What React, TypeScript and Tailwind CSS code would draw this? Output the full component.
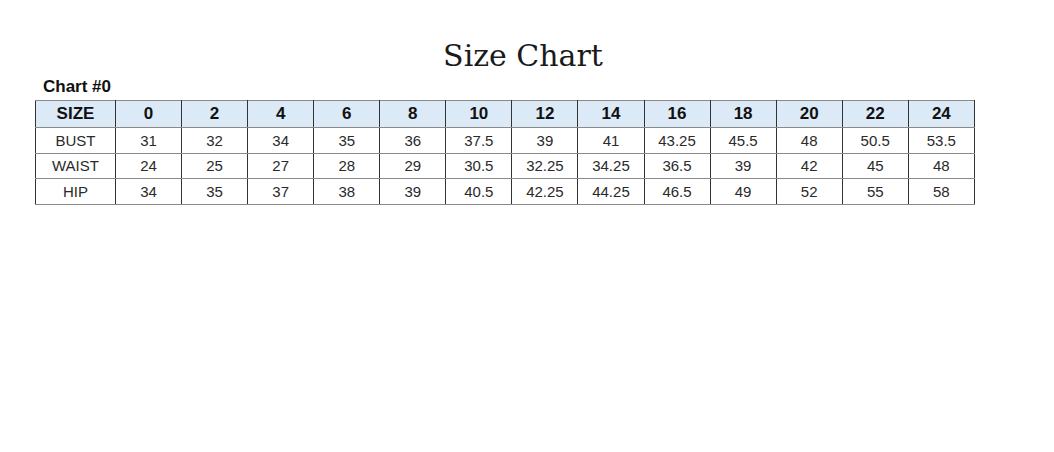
const sizes = ["0", "2", "4", "6", "8", "10", "12", "14", "16", "18", "20", "22", "24"];

const rows = [
  { label: "BUST", values: ["31", "32", "34", "35", "36", "37.5", "39", "41", "43.25", "45.5", "48", "50.5", "53.5"] },
  { label: "WAIST", values: ["24", "25", "27", "28", "29", "30.5", "32.25", "34.25", "36.5", "39", "42", "45", "48"] },
  { label: "HIP", values: ["34", "35", "37", "38", "39", "40.5", "42.25", "44.25", "46.5", "49", "52", "55", "58"] },
];

export default function App() {
  return (
    <div className="w-[1054px] h-[452px] bg-white pl-[35px] pt-[39px] font-['Liberation_Sans',Arial,sans-serif]">
      <h1 className="w-[976px] text-center font-['DejaVu_Serif',serif] text-[30px] leading-[34px] text-[#1a1a1a]">
        Size Chart
      </h1>
      <p className="mt-[3px] pl-[8px] text-[17px] leading-[22px] font-bold text-[#111]">Chart #0</p>
      <table className="mt-[2px] w-[940px] table-fixed border-collapse">
        <thead>
          <tr className="h-[27px] bg-[#dce9f6]">
            <th className="w-[80px] border border-x-[#333] border-y-[#8a8a8a] text-[17px] font-bold text-[#111] p-0">SIZE</th>
            {sizes.map((s) => (
              <th key={s} className="border border-x-[#333] border-y-[#8a8a8a] text-[17px] font-bold text-[#111] p-0">
                {s}
              </th>
            ))}
          </tr>
        </thead>
        <tbody>
          {rows.map((r) => (
            <tr key={r.label} className="h-[25.5px]">
              <td className="border border-x-[#333] border-y-[#8a8a8a] text-center text-[15px] text-[#2a2a2a] pt-[1px] pb-0 px-0">{r.label}</td>
              {r.values.map((v, i) => (
                <td key={i} className="border border-x-[#333] border-y-[#8a8a8a] text-center text-[15px] text-[#2a2a2a] pt-[1px] pb-0 px-0">
                  {v}
                </td>
              ))}
            </tr>
          ))}
        </tbody>
      </table>
    </div>
  );
}
